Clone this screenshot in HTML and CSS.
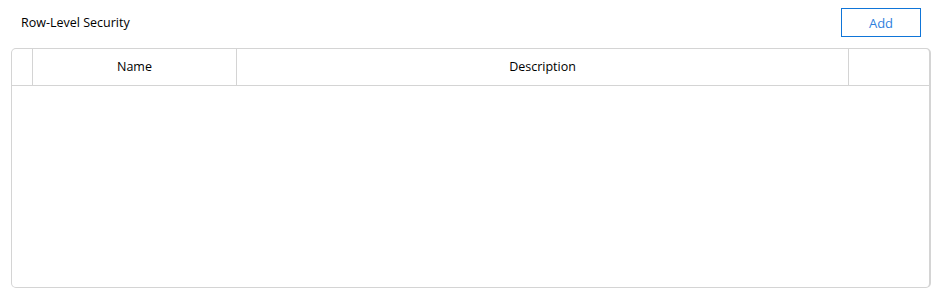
FILE: index.html
```html
<!DOCTYPE html>
<html lang="en">
<head>
    <meta charset="UTF-8">
    <meta name="viewport" content="width=device-width, initial-scale=1.0">
    <title>Row-Level Security</title>
    <link rel="stylesheet" href="styles.css">
</head>
<body>

    <!-- Title bar with the add button -->
    <div class="rls-toolbar">
        <span class="rls-title">Row-Level Security</span>
        <button class="rls-add" type="button">Add</button>
    </div>

    <!-- Empty rule table -->
    <div class="rls-table">
        <div class="rls-head">
            <div class="rls-cell"></div>
            <div class="rls-cell">Name</div>
            <div class="rls-cell">Description</div>
            <div class="rls-cell"></div>
        </div>
        <div class="rls-body"></div>
    </div>

</body>
</html>
```

FILE: styles.css
```css
body {
    margin: 0;
    background-color: #FFFFFF;
    font-family: "Open Sans", "Liberation Sans", sans-serif;
    color: #000000;
}

.rls-toolbar {
    display: flex;
    justify-content: space-between;
    align-items: center;
    padding: 8px 19px 0 21px;
}

.rls-title {
    font-size: 12.5px;
    padding-bottom: 1px;
}

.rls-add {
    width: 80px;
    height: 29px;
    border: 1px solid #0F75D8;
    border-radius: 0;
    background-color: #FFFFFF;
    color: #2F7FDD;
    font-family: inherit;
    font-size: 13px;
    cursor: pointer;
}

.rls-table {
    margin: 11px 9px 0 11px;
    height: 238px;
    border: 1px solid #D4D4D4;
    border-right-width: 2px;
    border-radius: 5px;
    display: flex;
    flex-direction: column;
}

.rls-head {
    display: grid;
    grid-template-columns: 20px 204px 1fr 81px;
    height: 36px;
    border-bottom: 1px solid #D4D4D4;
}

.rls-cell {
    display: flex;
    align-items: center;
    justify-content: center;
    padding-bottom: 1px;
    font-size: 12.5px;
}

.rls-cell + .rls-cell {
    border-left: 1px solid #D4D4D4;
}

.rls-body {
    flex: 1;
}
```
